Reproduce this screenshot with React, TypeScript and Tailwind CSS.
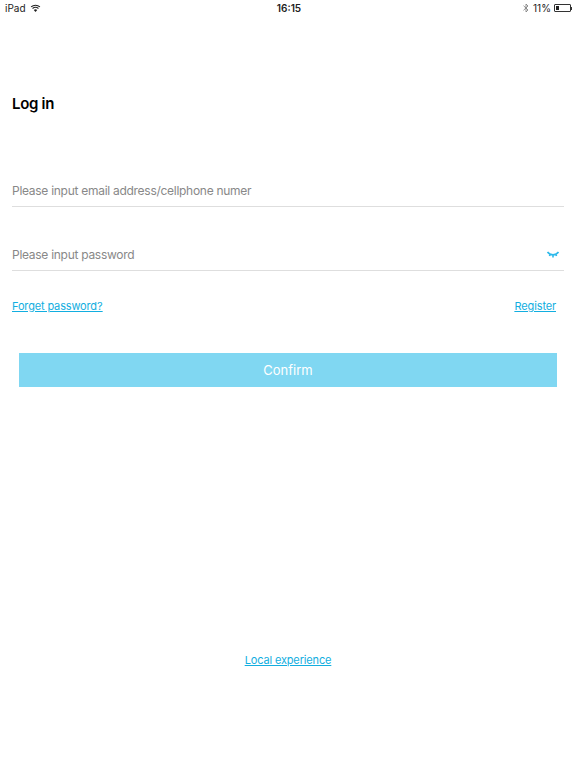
export default function App() {
  return (
    <div className="w-[576px] h-[768px] bg-white flex flex-col overflow-hidden text-[#111] font-['Inter','Liberation_Sans',sans-serif]">
      <div className="h-[16px] flex items-center justify-between pl-[5px] pr-[4px] text-[10px] text-[#222]">
        <div className="w-[100px] flex items-center gap-[4px]">
          <span>iPad</span>
          <svg width="11" height="8" viewBox="0 0 11 8" fill="#222"><path d="M5.5 8 3.8 5.9a2.7 2.7 0 0 1 3.4 0Z"/><path d="M2.9 4.9a4 4 0 0 1 5.2 0l.7-.8a5.1 5.1 0 0 0-6.6 0Z"/><path d="M1.5 3.3a6 6 0 0 1 8 0l.8-.8a7.2 7.2 0 0 0-9.6 0Z"/></svg>
        </div>
        <span className="font-semibold ml-[1px]">16:15</span>
        <div className="w-[100px] flex items-center justify-end gap-[4px]">
          <svg width="6" height="10" viewBox="0 0 6 10" fill="none" stroke="#777" strokeWidth="0.8"><path d="M.5 2.7 5 7 3 9V1l2 2L.5 7.3"/></svg>
          <span className="-mr-[1px]">11%</span>
          <div className="flex items-center">
            <div className="w-[17px] h-[8px] border border-[#333] rounded-[1px] p-[1px]"><div className="w-[3px] h-full bg-[#222]" /></div>
            <div className="w-[1px] h-[3px] bg-[#333]" />
          </div>
        </div>
      </div>

      <h1 className="mt-[78px] ml-[12px] text-[15px] leading-[20px] font-semibold text-black tracking-[-0.3px]">Log in</h1>

      <div className="mt-[60px] mx-[12px] h-[33px] pt-[1px] border-b border-[#dedede] flex items-center text-[12px] tracking-[-0.28px] text-[#888]">
        Please input email address/cellphone numer
      </div>
      <div className="mt-[31px] mx-[12px] h-[33px] pt-[1px] border-b border-[#dedede] flex items-center justify-between text-[12px] tracking-[-0.28px] text-[#888]">
        <span>Please input password</span>
        <svg className="mr-[4px]" width="14" height="8" viewBox="0 0 14 8" fill="none" stroke="#2db9ea" strokeWidth="1.6"><path d="M1.5 1C4 4.6 10 4.6 12.5 1M4 3.8 3.4 5M7 4.5V6.5M10 3.8l.6 1.2"/></svg>
      </div>

      <div className="mt-[26px] ml-[12px] mr-[20px] flex justify-between text-[11px] tracking-[-0.15px] leading-[18px] text-[#12aee0] underline">
        <a>Forget password?</a>
        <a>Register</a>
      </div>

      <button className="mt-[38px] ml-[19px] w-[538px] h-[34px] pt-[1px] bg-[#80d7f2] text-white text-[13px]">Confirm</button>

      <a className="mt-[264px] text-center text-[11px] tracking-[-0.15px] leading-[18px] text-[#12aee0] underline">Local experience</a>
    </div>
  );
}
